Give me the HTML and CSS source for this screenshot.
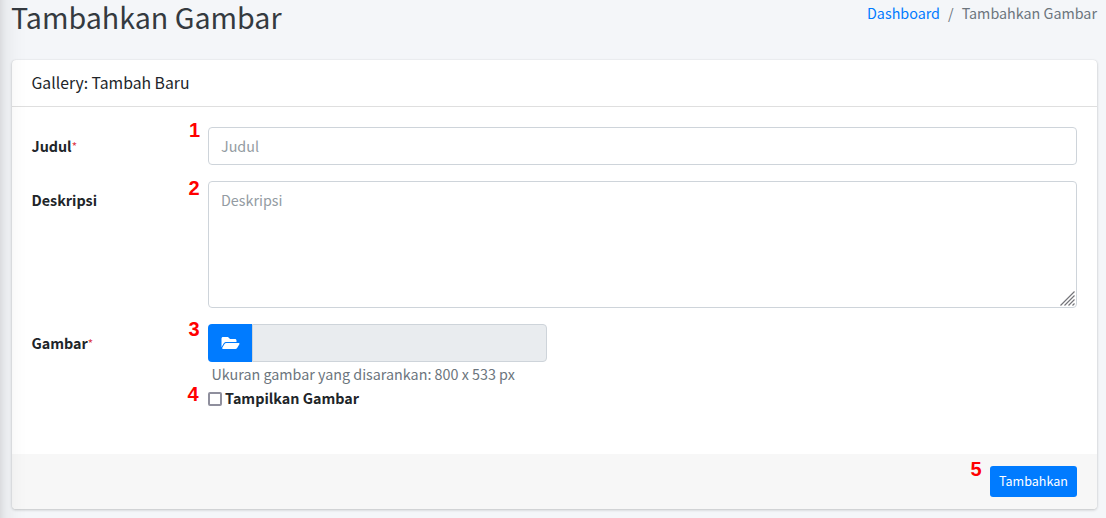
FILE: index.html
```html
<!DOCTYPE html>
<html lang="id">
<head>
<meta charset="utf-8">
<title>Tambahkan Gambar</title>
<link rel="stylesheet" href="styles.css">
</head>
<body>
<div class="sidebar-shadow"></div>
<header class="page-header">
  <h1 class="page-title">Tambahkan Gambar</h1>
  <nav class="breadcrumb"><a class="crumb-link" href="#">Dashboard</a><span class="crumb-separator">/</span><span class="crumb-current">Tambahkan Gambar</span></nav>
</header>
<form class="card">
  <div class="card-header"><h3 class="card-title">Gallery: Tambah Baru</h3></div>
  <div class="card-body">
    <div class="form-row">
      <label class="form-label" for="title"><span class="label-title">Judul</span><span class="required">*</span></label>
      <div class="field">
        <span class="marker marker-1">1</span>
        <input class="control text-input" id="title" type="text" placeholder="Judul">
      </div>
    </div>
    <div class="form-row">
      <label class="form-label" for="description"><span class="label-description">Deskripsi</span></label>
      <div class="field">
        <span class="marker marker-2">2</span>
        <textarea class="control textarea" id="description" placeholder="Deskripsi"></textarea>
        <svg class="resize-grip" width="15" height="15" viewBox="0 0 15 15"><path d="M.5 14.5l14-14M4.5 14.5l10-10M8.500 14.500l6-6M12.500 14.500l2-2"/></svg>
      </div>
    </div>
    <div class="form-row">
      <label class="form-label" for="image"><span class="label-image">Gambar</span><span class="required">*</span></label>
      <div class="field">
        <span class="marker marker-3">3</span>
        <div class="input-group">
          <button class="browse" type="button" aria-label="Pilih gambar"><svg width="19" height="16" viewBox="0 0 576 512"><path fill="currentColor" d="M572.694 292.093L500.270 416.248A63.997 63.997 0 0 1 444.989 448H45.025c-18.523 0-30.064-20.093-20.731-36.093l72.424-124.155A64 64 0 0 1 152 256h399.964c18.523 0 30.064 20.093 20.730 36.093zM152 224h328v-48c0-26.510-21.490-48-48-48H272l-64-64H48C21.490 64 0 85.490 0 112v278.046l69.077-118.418C86.214 242.250 117.989 224 152 224z"/></svg></button>
          <input class="control file-path" id="image" type="text" readonly>
        </div>
        <p class="hint">Ukuran gambar yang disarankan: 800 x 533 px</p>
        <div class="check-row">
          <span class="marker marker-4">4</span>
          <input class="checkbox" id="show" type="checkbox">
          <label class="check-label" for="show">Tampilkan Gambar</label>
        </div>
      </div>
    </div>
  </div>
  <div class="card-footer">
    <div class="submit-wrap"><span class="marker marker-5">5</span><button class="submit" type="button">Tambahkan</button></div>
  </div>
</form>
</body>
</html>
```
FILE: styles.css
```css
* { box-sizing: border-box; }
body {
  margin: 0;
  height: 518px;
  padding: 0 9px 0 12px;
  overflow: hidden;
  background: #f4f6f9;
  color: #212529;
  font-family: "Noto Sans CJK SC", "Open Sans", sans-serif;
  font-size: 14.33px;
  line-height: 24px;
}
.sidebar-shadow {
  position: fixed;
  z-index: 5;
  left: -253px;
  top: -60px;
  width: 250px;
  height: 700px;
  box-shadow: 0 14px 28px rgba(0,0,0,.16), 0 10px 10px rgba(0,0,0,.16);
  pointer-events: none;
}
.page-header { display: flex; justify-content: space-between; height: 60px; }
.page-title { margin: 0 0 0 -1px; font-size: 28.65px; font-weight: 400; line-height: 34px; white-space: nowrap; color: #343a40; }
.breadcrumb { display: flex; padding-top: 1px; white-space: nowrap; color: #6c757d; }
.crumb-link { color: #007bff; text-decoration: none; }
.crumb-separator { padding: 0 8px; }
.card {
  display: flex;
  flex-direction: column;
  height: 449px;
  background: #fff;
  border-radius: 4px;
  overflow: hidden;
  box-shadow: 0 0 1px rgba(0,0,0,.125), 0 1px 3px rgba(0,0,0,.2);
  width: 1085px;
}
.card-header { height: 47px; padding: 11px 19.5px; border-bottom: 1px solid rgba(0,0,0,.125); }
.card-title { margin: 0; font-size: 15.76px; font-weight: 400; line-height: 24px; }
.card-body { flex: 1; padding: 20px; }
.form-row { display: grid; grid-template-columns: 176px 869px; margin-bottom: 16px; }
.form-label { padding-top: 7px; margin-left: -.5px; font-weight: 700; white-space: nowrap; }
.required { color: #dc3545; font-size: 11.5px; font-weight: 400; vertical-align: 1px; line-height: 1; }
.field { position: relative; }
.control {
  display: block;
  width: 100%;
  height: 38px;
  padding: 6px 12px;
  border: 1px solid #ced4da;
  border-radius: 4px;
  background: #fff;
  color: #495057;
  font: inherit;
  line-height: 24px;
  outline: 0;
}
.control::placeholder { color: #939ba2; opacity: 1; }
.text-input { padding: 5px 12px 7px; }
.textarea { height: 127px; resize: none; }
.resize-grip { position: absolute; right: 2px; bottom: 2px; fill: none; stroke: #75757a; stroke-width: 1.2; }
.input-group { display: flex; width: 339px; }
.browse {
  display: flex;
  align-items: center;
  justify-content: center;
  flex: none;
  width: 44px;
  height: 38px;
  padding: 0;
  border: 0;
  border-radius: 4px 0 0 4px;
  background: #007bff;
  color: #fff;
}
.file-path { border-left-color: #ced4da; border-radius: 0 4px 4px 0; background: #e9ecef; }
.hint { margin: 0 0 0 3.5px; line-height: 24px; color: #6c757d; white-space: nowrap; }
.check-row { position: relative; display: flex; align-items: center; height: 24px; }
.checkbox { appearance: none; width: 14px; height: 14px; margin: 2px 3px 0 0; border: 2px solid #8f8f9d; border-radius: 2px; background: #fff; }
.check-label { font-weight: 700; white-space: nowrap; }
.card-footer { display: flex; justify-content: flex-end; height: 55px; padding: 12px 20px; background: #f7f7f7; }
.submit-wrap { position: relative; }
.submit {
  display: block;
  width: 87px;
  height: 31px;
  padding: 0 0 2px;
  border: 0;
  border-radius: 3px;
  background: #007bff;
  color: #fff;
  font: inherit;
  font-size: 12.54px;
  line-height: 29px;
}
.marker { position: absolute; left: -19.5px; color: #f00; font: bold 20px/20px "Liberation Sans", Arial, sans-serif; }
.marker-1 { top: -7px; left: -19px; }
.marker-2 { top: -3px; }
.marker-3 { top: -5px; }
.marker-4 { top: -2px; left: -20.5px; }
.marker-5 { top: -7px; }
```
